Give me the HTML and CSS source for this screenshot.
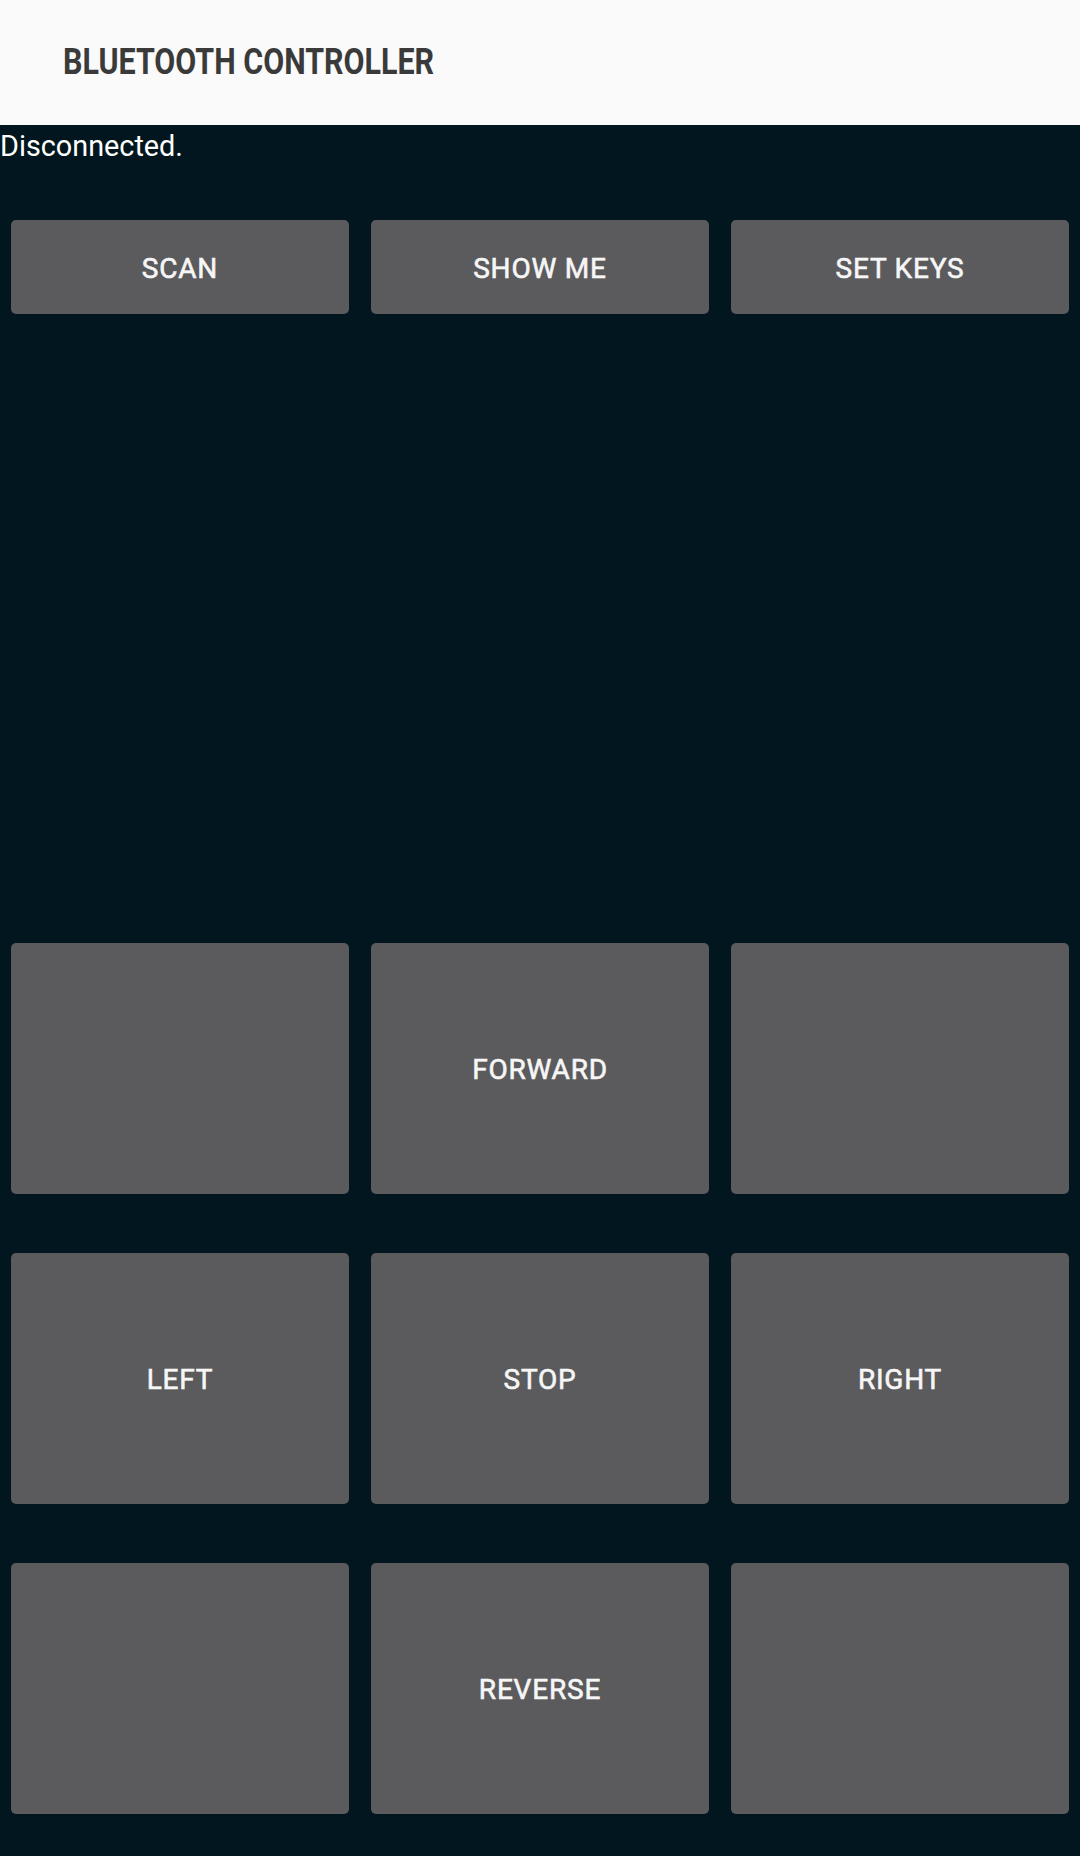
FILE: index.html
```html
<!DOCTYPE html>
<html>
<head>
<meta charset="utf-8">
<link rel="stylesheet" href="styles.css">
</head>
<body>
<header class="appbar">
  <h1 class="title">BLUETOOTH CONTROLLER</h1>
</header>
<main class="content">
  <div class="status">Disconnected.</div>
  <div class="toprow">
    <div class="cell"><button class="btn small">SCAN</button></div>
    <div class="cell"><button class="btn small">SHOW ME</button></div>
    <div class="cell"><button class="btn small">SET KEYS</button></div>
  </div>
  <div class="pad">
    <div class="cell"><button class="btn big"></button></div>
    <div class="cell"><button class="btn big">FORWARD</button></div>
    <div class="cell"><button class="btn big"></button></div>
    <div class="cell"><button class="btn big">LEFT</button></div>
    <div class="cell"><button class="btn big">STOP</button></div>
    <div class="cell"><button class="btn big">RIGHT</button></div>
    <div class="cell"><button class="btn big"></button></div>
    <div class="cell"><button class="btn big">REVERSE</button></div>
    <div class="cell"><button class="btn big"></button></div>
  </div>
</main>
</body>
</html>
```
FILE: styles.css
```css
html, body {
  margin: 0;
  padding: 0;
}
body {
  width: 1080px;
  height: 1856px;
  background: #01161e;
  font-family: Roboto, "Noto Sans", sans-serif;
  overflow: hidden;
}
.appbar {
  height: 125px;
  background: #fafafa;
  display: flex;
  align-items: center;
  padding-left: 63px;
  box-sizing: border-box;
}
.title {
  margin: 0;
  font-family: Roboto, sans-serif;
  font-weight: 700;
  font-size: 36.5px;
  color: #3a3a3a;
  transform: scaleX(0.834);
  transform-origin: left center;
  white-space: nowrap;
  line-height: 1;
}
.status {
  color: #ffffff;
  font-size: 28.8px;
  line-height: 42px;
  height: 42px;
}
.toprow {
  display: grid;
  grid-template-columns: repeat(3, 360px);
  margin-top: 53px;
}
.cell {
  padding: 0 11px;
  box-sizing: border-box;
}
.btn {
  display: flex;
  align-items: center;
  justify-content: center;
  width: 100%;
  border: 0;
  margin: 0;
  padding: 2px 0 0;
  box-sizing: border-box;
  background: #5b5b5d;
  border-radius: 5px;
  color: #f6f6f6;
  font-family: Roboto, sans-serif;
  font-weight: 400;
  font-size: 28px;
  letter-spacing: 0.8px;
  -webkit-text-stroke: 0.6px #f6f6f6;
}
.small {
  height: 94px;
}
.pad {
  display: grid;
  grid-template-columns: repeat(3, 360px);
  grid-auto-rows: 251.2px;
  row-gap: 59.1px;
  margin-top: 628.6px;
}
.big {
  height: 100%;
}
```
